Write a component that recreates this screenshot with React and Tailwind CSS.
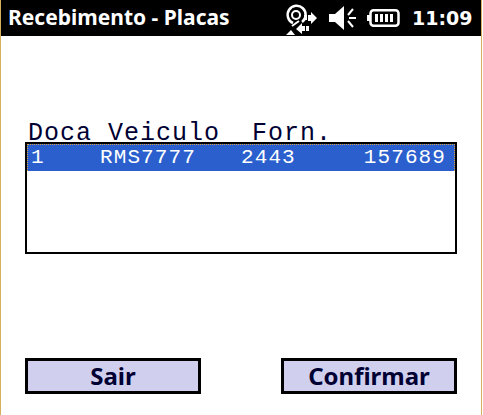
import React from 'react';

const columns = ['1', 'RMS7777', '2443', '157689'];

function ConnectionIcon() {
  return (
    <svg width="33" height="33" viewBox="0 0 33 33" className="block">
      <path d="M8 21A9 9 0 1 1 17 20" fill="none" stroke="#fff" strokeWidth="2.5" />
      <circle cx="11" cy="13" r="4" fill="none" stroke="#fff" strokeWidth="2" />
      <path d="M7 24 L14 19" stroke="#fff" strokeWidth="2" />
      <path d="M19 13h3v5h-3zM23 13h3v-3l6 6-6 6v-3h-3z" fill="#fff" />
      <path d="M11 27l6-6v3h3v5h-3v3z" fill="#fff" />
      <path d="M21 24h3v5h-3z" fill="#fff" />
      <path d="M1 33l5-5 4 5z" fill="#fff" />
    </svg>
  );
}

function VolumeIcon() {
  return (
    <svg width="28" height="24" viewBox="0 0 28 24" className="block">
      <path d="M0 8h6l9-8v24l-9-8H0z" fill="#fff" />
      <path d="M19 9l5-6M20 12h7M19 15l5 6" stroke="#fff" strokeWidth="2" />
    </svg>
  );
}

function BatteryIcon() {
  return (
    <svg width="33" height="18" viewBox="0 0 33 18" className="block">
      <rect x="3.5" y="1.25" width="28" height="15.5" rx="3" fill="none" stroke="#fff" strokeWidth="2.5" />
      <rect x="0" y="6" width="3" height="6" fill="#fff" />
      <path d="M8 5h3v8H8zM13 5h3v8h-3zM18 5h3v8h-3zM23 5h3v8h-3z" fill="#fff" />
    </svg>
  );
}

export default function App() {
  return (
    <div className="w-[483px] h-[415px] bg-white pr-px">
      <div className="h-full border-x border-[#d4b05c] overflow-hidden flex flex-col">
        <div className="h-9 bg-black flex items-center text-white font-bold">
          <span className="ml-[7px] flex-1 font-['Noto_Sans'] text-[21px]">Recebimento - Placas</span>
          <div className="flex items-center">
            <ConnectionIcon />
            <div className="ml-[11px]"><VolumeIcon /></div>
            <div className="ml-[10px]"><BatteryIcon /></div>
            <span className="ml-[12px] mr-[9px] w-[60px] font-['DejaVu_Sans'] text-[19px]">11:09</span>
          </div>
        </div>

        <div className="mt-[87px] ml-[27px] h-[19px] leading-[22px] font-['Liberation_Mono'] text-[25px] tracking-[1px] text-[#000033] whitespace-pre">
          Doca Veiculo  Forn.
        </div>

        <div className="ml-[24px] mr-[24px] h-[112px] border-2 border-black bg-white">
          <div className="h-[27px] bg-[#2a5fcd] border-x border-t border-dotted border-[#d9a441] flex items-center font-['Liberation_Mono'] text-[21px] tracking-[1.1px] text-white">
            <span className="ml-[3px] w-[69px]">{columns[0]}</span>
            <span className="w-[141px]">{columns[1]}</span>
            <span className="flex-1">{columns[2]}</span>
            <span className="mr-[8px]">{columns[3]}</span>
          </div>
        </div>

        <div className="mt-[104px] ml-[24px] mr-[24px] flex justify-between font-['Noto_Sans'] font-bold text-[24px] text-[#000033]">
          <button className="w-[176px] h-[36px] border-[3px] border-black bg-[#d0d0ee] flex items-center justify-center">Sair</button>
          <button className="w-[176px] h-[36px] border-[3px] border-black bg-[#d0d0ee] flex items-center justify-center">Confirmar</button>
        </div>
      </div>
    </div>
  );
}
